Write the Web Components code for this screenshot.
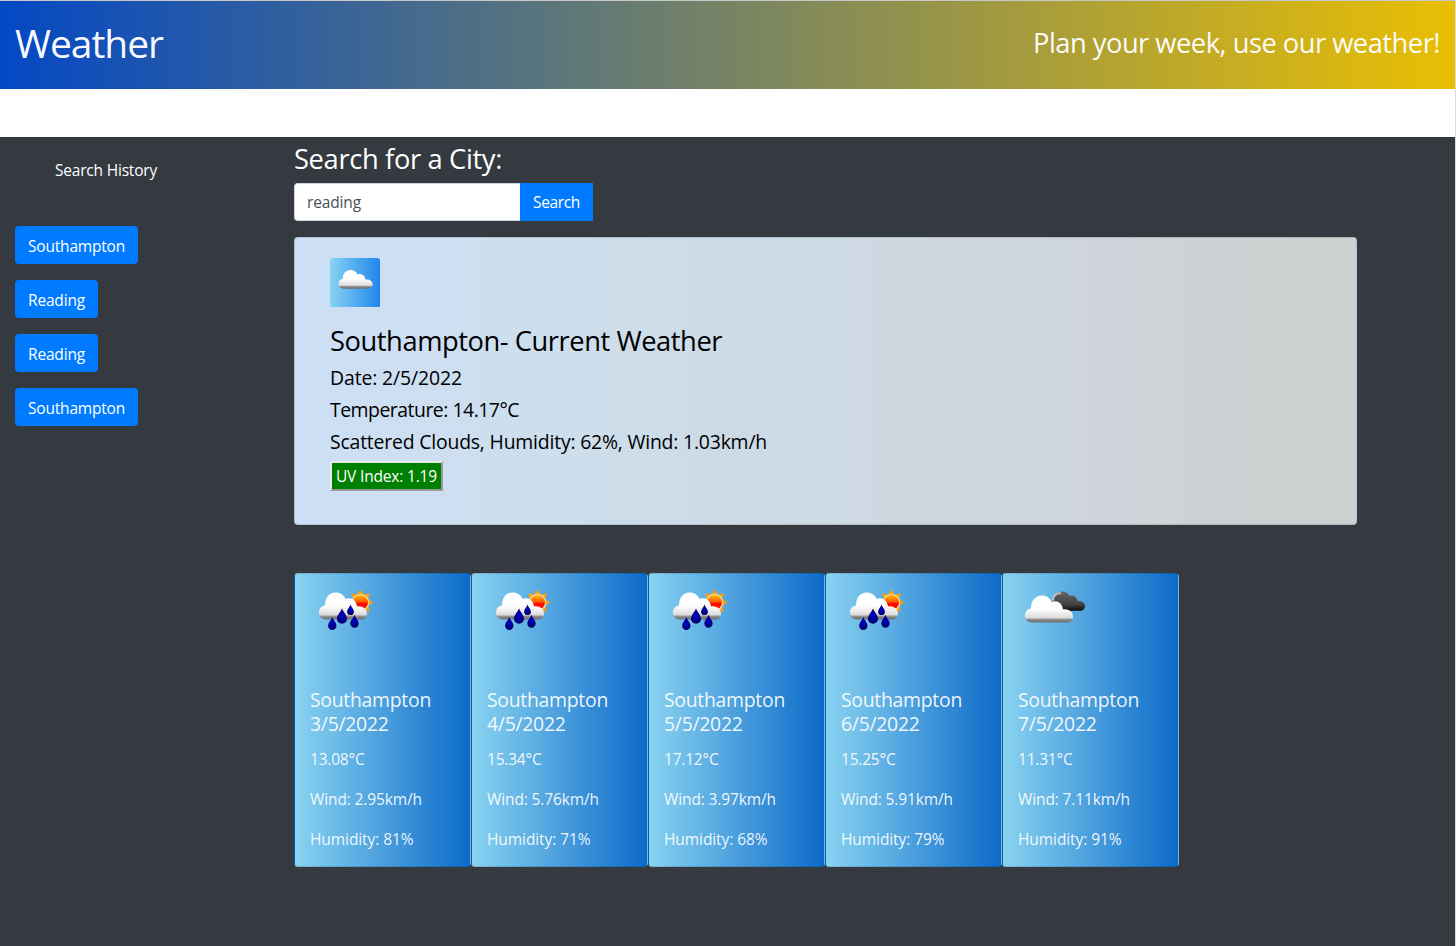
<!DOCTYPE html>
<html lang="en">
<head>
<meta charset="utf-8">
<title>Weather</title>
<style>
html,body{margin:0;height:100%;overflow:hidden;background:#fff}
body{font-family:"Open Sans","Noto Sans",sans-serif;font-size:15.5px;line-height:24px;color:#fff}
</style>
</head>
<body>
<weather-app></weather-app>
<script>
const define = (name, html, setup) => customElements.define(name, class extends HTMLElement {
  connectedCallback() {
    if (this.shadowRoot) return;
    const t = document.createElement('template');
    t.innerHTML = typeof html === 'function' ? html(this) : html;
    this.attachShadow({ mode: 'open' }).append(t.content.cloneNode(true));
    if (setup) setup(this);
  }
});

// Text whose tracking is adjusted so that its longest line has an intended width.
define('fit-text', `<style>:host{display:block;width:max-content;white-space:pre}span{display:inline-block}</style><span><slot></slot></span>`, el => {
  const s = el.shadowRoot.querySelector('span');
  const want = +el.getAttribute('w');
  const n = Math.max(...el.textContent.split('\n').map(l => l.length));
  s.style.letterSpacing = ((want - s.getBoundingClientRect().width) / n).toFixed(3) + 'px';
});

define('site-header', `<style>
:host{display:flex;justify-content:space-between;box-sizing:border-box;height:88px;padding:0 15px;background:linear-gradient(90deg,#0448c4,#e9bf04);color:rgba(255,255,255,.97)}
.brand{font-size:39px;line-height:48px;padding-top:18px}
.tag{font-size:27.3px;line-height:34px;padding-top:25px}
</style><fit-text class="brand" w="148">Weather</fit-text><fit-text class="tag" w="407">Plan your week, use our weather!</fit-text>`);

define('city-button', e => `<style>
:host{display:block;width:max-content}
button{display:block;box-sizing:border-box;height:38px;padding:1px 13px 0;border:0;border-radius:${e.hasAttribute('square') ? '0' : '4px'};background:#007bff;color:#fff;font:inherit}
:host([square]) button{padding-top:0}
</style><button><fit-text w="${e.getAttribute('w')}">${e.getAttribute('label')}</fit-text></button>`);

define('search-history', `<style>
:host{display:flex;flex-direction:column;gap:16px;box-sizing:border-box;width:294px;padding:21px 15px}
fit-text{margin:0 0 28px 40px;line-height:24px}
</style><fit-text w="102">Search History</fit-text>
<city-button label="Southampton" w="97"></city-button><city-button label="Reading" w="57"></city-button>
<city-button label="Reading" w="57"></city-button><city-button label="Southampton" w="97"></city-button>`);

define('city-search', `<style>
:host{display:block;padding-top:5px}
.title{font-size:27.3px;line-height:34px;margin-bottom:7px}
.row{display:flex}
.field{box-sizing:border-box;width:226px;height:38px;padding:6px 12px;border:1px solid #ced4da;border-right:0;border-radius:4px 0 0 4px;background:#fff;color:#495057}
</style><fit-text class="title" w="208">Search for a City:</fit-text>
<div class="row"><div class="field"><fit-text w="54">reading</fit-text></div><city-button square label="Search" w="47"></city-button></div>`);

const cloudPath = 'M7 27C2.5 27 0 24 0 20c0-4 2.5-6.5 6-7C6 5 10.500 0 16.500 0c5 0 8.500 2.500 10 6.500C32 4 37.500 8 38 14c5-1 10 2 10 7 0 4-2.500 6-6 6Z';
define('weather-icon', e => {
  const kind = e.getAttribute('kind');
  const defs = `<defs>
<linearGradient id="c" x1="0" y1="0" x2="0" y2="1"><stop offset="0" stop-color="#fff"/><stop offset=".5" stop-color="#fff"/><stop offset=".82" stop-color="#dcdcdc"/><stop offset=".9" stop-color="#858585"/><stop offset="1" stop-color="#707070"/></linearGradient>
<linearGradient id="d" x1="0" y1="0" x2="0" y2="1"><stop offset="0" stop-color="#666"/><stop offset=".7" stop-color="#404040"/><stop offset="1" stop-color="#080808"/></linearGradient>
<linearGradient id="s" x1="0" y1="0" x2="0" y2="1"><stop offset="0" stop-color="#ffbc00"/><stop offset=".45" stop-color="#ff5a00"/><stop offset=".6" stop-color="#f00"/><stop offset="1" stop-color="#ff2600"/></linearGradient>
<radialGradient id="r"><stop offset="0" stop-color="#0000d8"/><stop offset="1" stop-color="#000064"/></radialGradient></defs>`;
  const drop = (x, y, k) => `<path transform="translate(${x} ${y}) scale(${k})" fill="url(#r)" d="M0-7C.7-4 4.500-1 4.500 2.500a4.500 4.500 0 0 1-9 0C-4.500-1-.7-4 0-7Z"/>`;
  let art, w = 100, h = 100;
  if (kind === 'cloud') { w = 50; h = 49;
    art = `<path transform="translate(8.500 12) scale(.71 .69)" fill="url(#c)" d="${cloudPath}"/>`;
  } else if (kind === 'rain') {
    let rays = '';
    for (let i = 0; i < 8; i++) rays += `<path transform="rotate(${i * 45} 50.5 24.5)" fill="#f99d12" d="M47.5 16 50.5 11.5l3 4.500Z"/>`;
    art = rays + `<circle cx="50.5" cy="24.5" r="8.700" fill="#ffe08a"/><circle cx="50.5" cy="24.5" r="7.500" fill="url(#s)"/>
<path transform="translate(9 14.500)" fill="url(#c)" d="${cloudPath}"/>` + drop(40.5, 31.8, .75) + drop(32, 38, 1.12) + drop(22.3, 45.5, .93) + drop(44.5, 43.2, .93);
  } else {
    art = `<path transform="translate(32 13.500) scale(.73 .71)" fill="url(#d)" d="M7 27C0 20 1 15 5 12 4 5 10 0 16.500 0c5 0 8.500 2.500 10 6C32 4 37.500 8 38 14c5-1 10 2 10 6 0 4-2.500 7-6 7Z"/>
<path d="M35 22.500c0-5 4-8 8-7" fill="none" stroke="#d8d8d8" stroke-width="2" opacity=".8"/>
<path transform="translate(7 17.500)" fill="url(#c)" d="${cloudPath}"/>`;
  }
  return `<style>:host{display:block;width:${w}px;height:${h}px}svg{display:block}
:host([kind=cloud]){background:linear-gradient(90deg,#87d3f1,#2186ed);border-radius:3px 3px 0 0}</style>
<svg width="${w}" height="${h}" viewBox="0 0 ${w} ${h}">${defs}${art}</svg>`;
});

define('current-weather', `<style>
:host{display:block;box-sizing:border-box;width:1063px;height:288px;margin-top:16px;padding:20px 35px;border:1px solid rgba(0,0,0,.125);border-radius:4px;background:linear-gradient(90deg,#cddff6,#cddeec 25%,#cdd9e3 50%,#cfd4dc 77%,#cdd3d5 84%,#cdd1d0);color:#000}
.title{font-size:27.3px;line-height:34px;margin:17px 0 4px}
.line{font-size:19.4px;line-height:32px}
.uv{box-sizing:border-box;width:113px;height:30px;margin-top:3px;padding:1px 4px;border:2px solid;border-color:#e9e9e9 #999 #999 #e9e9e9;background:#008000;color:#fff}
</style><weather-icon kind="cloud"></weather-icon>
<fit-text class="title" w="392">Southampton- Current Weather</fit-text>
<fit-text class="line" w="132">Date: 2/5/2022</fit-text>
<fit-text class="line" w="189">Temperature: 14.17°C</fit-text>
<fit-text class="line" w="437">Scattered Clouds, Humidity: 62%, Wind: 1.03km/h</fit-text>
<div class="uv"><fit-text w="101">UV Index: 1.19</fit-text></div>`);

define('forecast-card', e => {
  const a = k => e.getAttribute(k);
  return `<style>
:host{display:block;box-sizing:border-box;width:177px;height:294px;padding:4px 15px;border:1px solid rgba(0,0,0,.125);border-radius:4px;background:linear-gradient(90deg,#89d3f1,#0c6bc9);color:rgba(255,255,255,.92)}
.h{font-size:19.400px;line-height:24px}
.t{line-height:24px;margin-bottom:16px}
.t.first{margin-top:11px}
weather-icon{margin-bottom:10px}
</style><weather-icon kind="${a('kind')}"></weather-icon>
<fit-text class="h" w="121">Southampton
${a('date')}</fit-text>
<fit-text class="t first" w="54.500">${a('temp')}°C</fit-text><fit-text class="t" w="112">Wind: ${a('wind')}km/h</fit-text><fit-text class="t" w="103.500">Humidity: ${a('hum')}%</fit-text>`;
});

define('weather-app', `<style>
:host{display:flex;flex-direction:column;box-sizing:border-box;height:946px;border-top:1px solid #c8c8c8;border-right:1px solid #dcdcdc}
.body{display:flex;flex:1;margin-top:48px;background:#343a40}
.forecast{display:flex;margin-top:48px}
</style><site-header></site-header>
<div class="body"><search-history></search-history><main><city-search></city-search><current-weather></current-weather>
<div class="forecast">
<forecast-card kind="rain" date="3/5/2022" temp="13.08" wind="2.95" hum="81"></forecast-card>
<forecast-card kind="rain" date="4/5/2022" temp="15.34" wind="5.76" hum="71"></forecast-card>
<forecast-card kind="rain" date="5/5/2022" temp="17.12" wind="3.97" hum="68"></forecast-card>
<forecast-card kind="rain" date="6/5/2022" temp="15.25" wind="5.91" hum="79"></forecast-card>
<forecast-card kind="clouds" date="7/5/2022" temp="11.31" wind="7.11" hum="91"></forecast-card>
</div></main></div>`);
</script>
</body>
</html>
